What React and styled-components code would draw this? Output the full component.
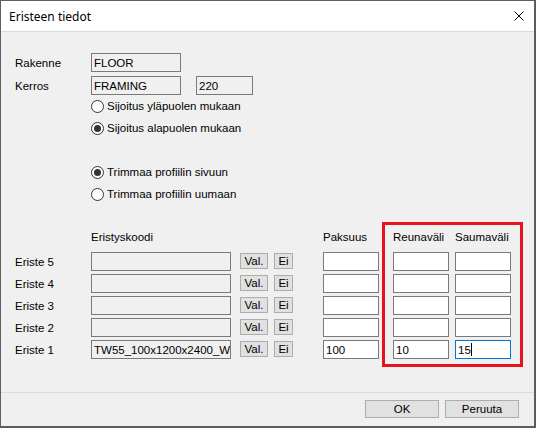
import React from 'react';
import styled, { createGlobalStyle } from 'styled-components';

const GlobalStyle = createGlobalStyle`
  html, body {
    margin: 0;
    padding: 0;
    background: #5a5a5a;
  }
  body {
    font-family: "Liberation Sans", Arial, sans-serif;
    font-size: 11.5px;
    color: #000;
  }
`;

const Window = styled.div`
  width: 535px;
  height: 427px;
  box-sizing: border-box;
  border: 1px solid #5f5f5f;
  background: #f0f0f0;
  display: flex;
  flex-direction: column;
`;

const TitleBar = styled.div`
  height: 30px;
  flex: none;
  background: #fff;
  border-bottom: 1px solid #dadada;
  display: flex;
  align-items: center;
  padding-left: 8px;
`;

const Title = styled.div`
  font-family: "Noto Sans", "Open Sans", sans-serif;
  font-size: 12px;
  color: #000;
`;

const CloseButton = styled.div`
  margin-left: auto;
  width: 30px;
  height: 30px;
  display: flex;
  align-items: center;
  justify-content: center;
`;

const Body = styled.div`
  height: 360px;
  flex: none;
  box-sizing: border-box;
  padding: 21px 0 0 14px;
  display: flex;
  flex-direction: column;
`;

const Fields = styled.div`
  display: flex;
  flex-direction: column;
  gap: 4px;
`;

const FieldRow = styled.div`
  display: flex;
  align-items: center;
  height: 19px;
`;

const FieldLabel = styled.div`
  width: 76px;
  flex: none;
`;

const TextBox = styled.div`
  width: ${p => p.$w}px;
  height: 19px;
  box-sizing: border-box;
  flex: none;
  margin-left: ${p => p.$ml || 0}px;
  border: 1px solid ${p => (p.$focus ? '#0078d7' : '#7a7a7a')};
  background: ${p => (p.$readOnly ? '#f0f0f0' : '#fff')};
  padding-left: 2px;
  display: flex;
  align-items: center;
  white-space: nowrap;
  overflow: hidden;
`;

const Caret = styled.span`
  display: inline-block;
  width: 1px;
  height: 13px;
  background: #000;
`;

const RadioList = styled.div`
  margin-left: 76px;
  margin-top: ${p => p.$mt || 0}px;
  display: flex;
  flex-direction: column;
`;

const RadioRow = styled.div`
  height: 22px;
  display: flex;
  align-items: center;
  gap: 3px;
`;

const RadioDot = styled.span`
  width: 13px;
  height: 13px;
  box-sizing: border-box;
  border-radius: 50%;
  border: 1px solid #333;
  background: #fff;
  display: flex;
  align-items: center;
  justify-content: center;
  &::after {
    content: '';
    width: 7px;
    height: 7px;
    border-radius: 50%;
    background: ${p => (p.$checked ? '#333' : 'transparent')};
  }
`;

const Table = styled.div`
  margin-top: 17px;
  display: flex;
  align-items: flex-start;
`;

const Column = styled.div`
  width: ${p => p.$w}px;
  margin-left: ${p => p.$ml || 0}px;
  padding-top: ${p => (p.$framed ? 0 : 3)}px;
  display: flex;
  flex-direction: column;
  gap: 3px;
  flex: none;
`;

const ColHeader = styled.div`
  height: 24px;
  box-sizing: border-box;
  padding-top: 6px;
  line-height: 13px;
  white-space: nowrap;
`;

const Cell = styled.div`
  height: 19px;
  display: flex;
  align-items: center;
`;

const SmallButton = styled.div`
  width: ${p => p.$w}px;
  height: 16px;
  margin-top: 1px;
  align-self: flex-start;
  box-sizing: border-box;
  background: #e1e1e1;
  border: 1px solid #adadad;
  display: flex;
  align-items: center;
  justify-content: center;
`;

const Frame = styled.div`
  margin-left: 3px;
  border: 3px solid #e8121f;
  padding: 0 9px 5px 8px;
  display: flex;
  gap: 6px;
`;

const Footer = styled.div`
  flex: 1;
  border-top: 1px solid #dcdcdc;
  display: flex;
  justify-content: flex-end;
  align-items: flex-start;
  gap: 6px;
  padding: 7px 15px 0 0;
`;

const DialogButton = styled.div`
  width: 74px;
  height: 18px;
  box-sizing: border-box;
  background: #e1e1e1;
  border: 1px solid #adadad;
  display: flex;
  align-items: center;
  justify-content: center;
`;

const rows = [
  { label: 'Eriste 5', code: '', thick: '', edge: '', seam: '' },
  { label: 'Eriste 4', code: '', thick: '', edge: '', seam: '' },
  { label: 'Eriste 3', code: '', thick: '', edge: '', seam: '' },
  { label: 'Eriste 2', code: '', thick: '', edge: '', seam: '' },
  { label: 'Eriste 1', code: 'TW55_100x1200x2400_W', thick: '100', edge: '10', seam: '15', active: true },
];

const CloseIcon = () => (
  <svg width="10" height="10" viewBox="0 0 10 10">
    <path d="M0.5 0.5 L9.5 9.5 M9.5 0.5 L0.5 9.5" stroke="#000" strokeWidth="1" />
  </svg>
);

const App = () => {
  return (
    <>
      <GlobalStyle />
      <Window>
        <TitleBar>
          <Title>Eristeen tiedot</Title>
          <CloseButton>
            <CloseIcon />
          </CloseButton>
        </TitleBar>
        <Body>
          <Fields>
            <FieldRow>
              <FieldLabel>Rakenne</FieldLabel>
              <TextBox $w={90} $readOnly>FLOOR</TextBox>
            </FieldRow>
            <FieldRow>
              <FieldLabel>Kerros</FieldLabel>
              <TextBox $w={90} $readOnly>FRAMING</TextBox>
              <TextBox $w={57} $ml={15} $readOnly>220</TextBox>
            </FieldRow>
          </Fields>

          <RadioList>
            <RadioRow><RadioDot />Sijoitus yläpuolen mukaan</RadioRow>
            <RadioRow><RadioDot $checked />Sijoitus alapuolen mukaan</RadioRow>
          </RadioList>

          <RadioList $mt={22}>
            <RadioRow><RadioDot $checked />Trimmaa profiilin sivuun</RadioRow>
            <RadioRow><RadioDot />Trimmaa profiilin uumaan</RadioRow>
          </RadioList>

          <Table>
            <Column $w={76}>
              <ColHeader />
              {rows.map(r => <Cell key={r.label}>{r.label}</Cell>)}
            </Column>
            <Column $w={140}>
              <ColHeader>Eristyskoodi</ColHeader>
              {rows.map(r => (
                <TextBox key={r.label} $w={140} $readOnly>{r.code}</TextBox>
              ))}
            </Column>
            <Column $w={28} $ml={9}>
              <ColHeader />
              {rows.map(r => (
                <Cell key={r.label}><SmallButton $w={28}>Val.</SmallButton></Cell>
              ))}
            </Column>
            <Column $w={19} $ml={6}>
              <ColHeader />
              {rows.map(r => (
                <Cell key={r.label}><SmallButton $w={19}>Ei</SmallButton></Cell>
              ))}
            </Column>
            <Column $w={56} $ml={30}>
              <ColHeader>Paksuus</ColHeader>
              {rows.map(r => <TextBox key={r.label} $w={56}>{r.thick}</TextBox>)}
            </Column>
            <Frame>
              <Column $w={56} $framed>
                <ColHeader>Reunaväli</ColHeader>
                {rows.map(r => <TextBox key={r.label} $w={56}>{r.edge}</TextBox>)}
              </Column>
              <Column $w={56} $framed>
                <ColHeader>Saumaväli</ColHeader>
                {rows.map(r => (
                  <TextBox key={r.label} $w={56} $focus={r.active}>
                    {r.seam}
                    {r.active && <Caret />}
                  </TextBox>
                ))}
              </Column>
            </Frame>
          </Table>
        </Body>
        <Footer>
          <DialogButton>OK</DialogButton>
          <DialogButton>Peruuta</DialogButton>
        </Footer>
      </Window>
    </>
  );
};

export default App;
